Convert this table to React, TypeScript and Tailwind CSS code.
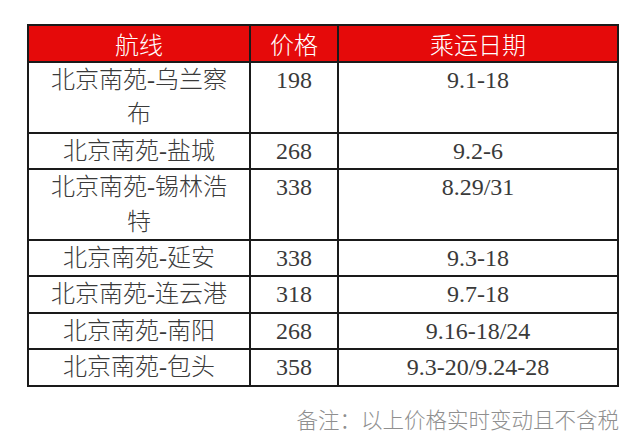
const rows = [
  { route: "北京南苑-乌兰察布", price: "198", date: "9.1-18" },
  { route: "北京南苑-盐城", price: "268", date: "9.2-6" },
  { route: "北京南苑-锡林浩特", price: "338", date: "8.29/31" },
  { route: "北京南苑-延安", price: "338", date: "9.3-18" },
  { route: "北京南苑-连云港", price: "318", date: "9.7-18" },
  { route: "北京南苑-南阳", price: "268", date: "9.16-18/24" },
  { route: "北京南苑-包头", price: "358", date: "9.3-20/9.24-28" },
];

const cell = "border-2 border-[#1a1a1a] px-4 py-0 align-top text-center";
const sans = "font-['Noto_Sans_CJK_SC',sans-serif]";
const serif = "font-['Liberation_Serif','Noto_Sans_CJK_SC',serif]";

export default function App() {
  return (
    <div className="min-h-screen w-[640px] bg-white pl-[27px] pt-[24px]">
      <table className={`w-[592px] table-fixed border-collapse text-[24px] leading-[34.4px] font-light text-[#3a3a3a] ${serif}`}>
        <colgroup>
          <col className="w-[222px]" />
          <col className="w-[88px]" />
          <col />
        </colgroup>
        <thead>
          <tr className="bg-[#e50a0a] text-white">
            <th className={`${cell} font-light leading-[35px] ${sans}`}>航线</th>
            <th className={`${cell} font-light leading-[35px] ${sans}`}>价格</th>
            <th className={`${cell} font-light leading-[35px] ${sans}`}>乘运日期</th>
          </tr>
        </thead>
        <tbody>
          {rows.map((r) => (
            <tr key={r.route}>
              <td className={cell}>{r.route}</td>
              <td className={cell}>{r.price}</td>
              <td className={cell}>{r.date}</td>
            </tr>
          ))}
        </tbody>
      </table>
      <p className={`mt-[20px] w-[592px] text-right text-[21.5px] leading-[24px] font-light text-[#8f8f8f] ${sans}`}>
        备注：以上价格实时变动且不含税
      </p>
    </div>
  );
}
